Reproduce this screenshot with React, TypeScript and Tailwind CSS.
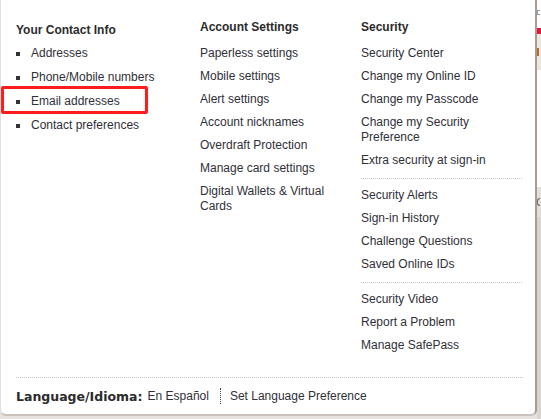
const contactLinks = ["Addresses", "Phone/Mobile numbers", "Email addresses", "Contact preferences"];

const accountLinks = [
  "Paperless settings",
  "Mobile settings",
  "Alert settings",
  "Account nicknames",
  "Overdraft Protection",
  "Manage card settings",
  "Digital Wallets & Virtual Cards",
];

const securityGroups = [
  ["Security Center", "Change my Online ID", "Change my Passcode", "Change my Security Preference", "Extra security at sign-in"],
  ["Security Alerts", "Sign-in History", "Challenge Questions", "Saved Online IDs"],
  ["Security Video", "Report a Problem", "Manage SafePass"],
];

const Heading = ({ children }: { children: string }) => (
  <h3 className="text-[12px] font-bold leading-[15px] text-[#2b2b2b]">{children}</h3>
);

const LinkItem = ({ label }: { label: string }) => (
  <li className="py-1 text-[12px] leading-[15px] text-[#2f2f38]">
    <a href="#">{label}</a>
  </li>
);

const ProfileMenu = () => (
  <div className="relative flex h-[416px] w-[537px] shrink-0 flex-col rounded-b-[6px] border-b-2 border-l border-r-2 border-b-[#cbc3bb] border-l-[#e3dfda] border-r-[#a89c92] bg-white pl-[15px] pt-[20px]">
    <div className="grid grid-cols-[184px_161px_161px]">
      <div className="pt-[3px]">
        <Heading>Your Contact Info</Heading>
        <ul className="mt-[2.5px]">
          {contactLinks.map((label) => (
            <li key={label} className="flex items-center py-1 text-[12px] leading-[16px] text-[#2f2f38]">
              <span className="mr-[11px] mt-[2px] h-[4px] w-[4px] bg-[#333]" />
              <a href="#">{label}</a>
            </li>
          ))}
        </ul>
      </div>

      <div className="pr-5">
        <Heading>Account Settings</Heading>
        <ul className="mt-[7px]">
          {accountLinks.map((label) => (
            <LinkItem key={label} label={label} />
          ))}
        </ul>
      </div>

      <div>
        <Heading>Security</Heading>
        <div className="mt-[7px]">
          {securityGroups.map((group, i) => (
            <div key={i}>
              {i > 0 && <div className="mb-[5px] mt-[6px] border-t border-dotted border-[#c4c4c4]" />}
              <ul>
                {group.map((label) => (
                  <LinkItem key={label} label={label} />
                ))}
              </ul>
            </div>
          ))}
        </div>
      </div>
    </div>

    <div className="mt-[20px] w-[507px] border-t border-dotted border-[#c4c4c4]" />
    <div className="flex items-center pt-[10px] text-[12px] leading-[15px] text-[#2f2f38]">
      <span className="font-['DejaVu_Sans',sans-serif] text-[12.5px] font-bold text-[#2b2b2b]">Language/Idioma:</span>
      <a href="#" className="ml-[5px]">
        En Español
      </a>
      <span className="ml-[11px] h-[16px] border-l border-dotted border-[#444]" />
      <a href="#" className="ml-[9px]">
        Set Language Preference
      </a>
    </div>

    {/* highlight annotation */}
    <div className="absolute left-[0px] top-[86px] h-[28px] w-[147px] rounded-[2px] border-[3px] border-[#ff1c1c]" />
  </div>
);

export default function App() {
  return (
    <div className="flex h-[419px] w-[541px] overflow-hidden bg-[#e6e3de] font-['Liberation_Sans',Arial,sans-serif]">
      <ProfileMenu />
      <div className="flex flex-1 flex-col">
        <div className="h-[28px] bg-white pt-[10px]">
          <div className="h-[5px] w-[3px] border border-r-0 border-[#8c9bb0]" />
        </div>
        <div className="h-[6px] bg-[#e31837]" />
        <div className="flex h-[36px] items-center bg-[#ece6dc]">
          <div className="h-[8px] w-[2px] bg-[#b0702a]" />
        </div>
        <div className="h-[117px] bg-white" />
        <div className="flex h-[30px] items-center bg-[#e2dfda]">
          <div className="h-[8px] w-[3px] rounded-l-full border border-r-0 border-[#6b6b6b]" />
        </div>
        <div className="flex-1 bg-[#d9d6d2]" />
      </div>
    </div>
  );
}
